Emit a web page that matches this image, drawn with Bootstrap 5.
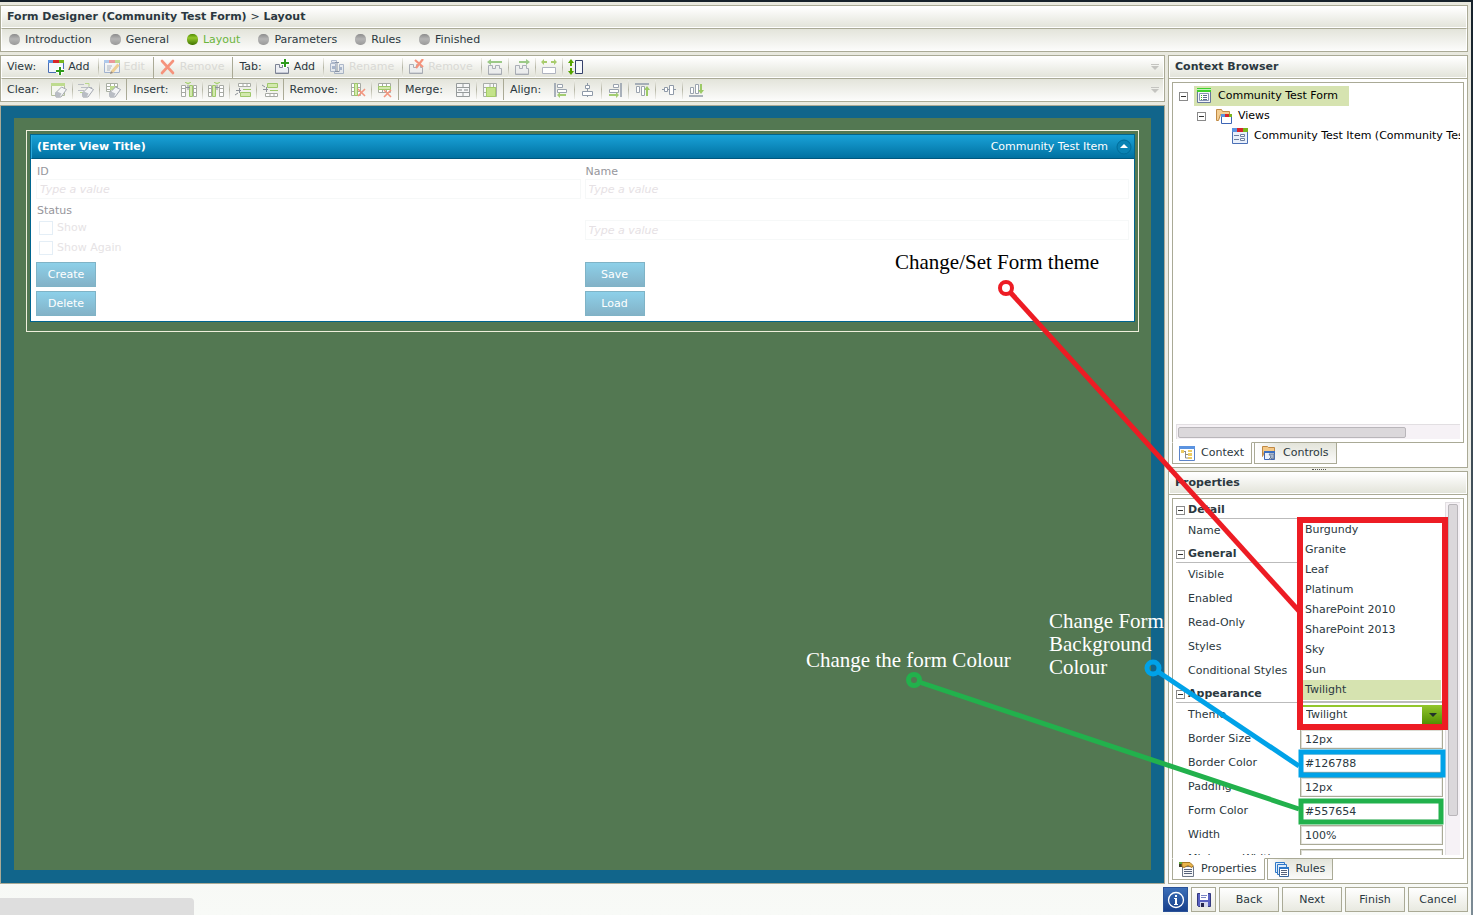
<!DOCTYPE html>
<html lang="en">
<head>
<meta charset="utf-8">
<meta name="viewport" content="width=device-width, initial-scale=1">
<title>Form Designer</title>
<link href="https://cdn.jsdelivr.net/npm/bootstrap@5.3.0/dist/css/bootstrap.min.css" rel="stylesheet">
<style>
:root{--line:#aaaa96;--ink:#2b3840;--face:"DejaVu Sans",Verdana,sans-serif}
body{font:11px/14px var(--face);color:var(--ink);background:linear-gradient(#e8e8de,#f0f1ea 60%,#f8faf7)}
.page{min-height:100vh;border-top:2px solid #16222b;padding:3px 3px 3px 0}
.edge{right:0;top:0;bottom:0;width:2px;background:linear-gradient(#16222b,#3e4c56 50%,#7c8b95)}
button,input,select{font:inherit;color:inherit}
.icon{width:16px;height:16px;flex:none}
.panel{border:1px solid var(--line);background:#fff}
.bar{height:22px;border:1px solid #fff;background:linear-gradient(#fff,#e3e4da)}
.bar.up{height:23px;background:linear-gradient(#e3e4da,#fbfbfa)}
.rule-top,.bar.rule-top{border-top:1px solid var(--line)}
.title{font-size:11px;line-height:14px;font-weight:bold;margin:0;padding-left:5px}
.steps{padding-left:7px}
.steps a{color:inherit;text-decoration:none;margin-right:18px}
.steps a.now{color:#6bb53c}
.dot{width:11px;height:11px;border-radius:5px;background:linear-gradient(#8c8c8c,#b4b4b4 45%,#999);margin-right:5px}
.now .dot{background:linear-gradient(#4f8c00,#93c62c 35%,#3f7300)}
.tool{border:0;background:none;padding:0 5px;height:20px}
.tool.wide{padding:0 8px 0 5px;gap:4px}
.tool:disabled{color:#d9d9d5}
.sep{width:1px;height:19px;background:linear-gradient(#f0f0ea,#b6b6a6,#f0f0ea)}
.sep.hard{background:var(--line);height:21px;margin-right:1px}
.caption{padding:0 7px 0 5px}
.stage{border:1px solid var(--line);background:#11658b;padding:12px 13px 13px}
.canvas{background:#537852;padding:12px}
.selected-view{border:1px solid #efefdc;padding:3px 3px 9px}
.view{border:1px solid #00658f;background:#fff}
.view-head{height:24px;background:linear-gradient(#1aa2d8,#0071a1);border-bottom:1px solid #00587f;color:#fff;padding:0 2px 0 5px;border-left:1px solid #2aa9dc}
.view-body{padding:6px 5px 5px}
.grid2{display:grid;grid-template-columns:1fr 1fr;column-gap:4px}
.faded{color:#96969c;padding-left:1px;display:block}
.value{width:100%;height:20px;border:1px solid #f6f8f8;padding:0 3px;background:#fff;display:block}
.value::placeholder{color:#e6e1e4;font-style:italic;opacity:1}
.tick{appearance:none;width:14px;height:14px;border:1px solid #e4eef6;margin:0 4px 0 3px}
.tickrow{height:20px;color:#e6e3e5}
.act{width:60px;height:25px;border:1px solid #7fb3c6;background:linear-gradient(#8dd0e9,#83b2c7);color:#fff;padding:0;display:block}
.side{width:300px;flex:none;gap:3px}
.side>section{flex:1 1 0;min-height:0}
.pane{border:1px solid var(--line);padding:3px;min-height:0}
.tree,.tree ul{list-style:none;margin:0;padding:0}
.tree{padding-left:3px}
.tree ul{padding-left:18px}
.tree .node{height:20px;white-space:nowrap;color:#000;gap:6px}
.tree .hit{height:20px;padding:0 11px 0 2px;gap:6px}
.tree .leaf{padding-left:17px}
.tree .sel{background:#d6e3b0}
.fold{width:9px;height:9px;border:1px solid #8a8a8a;background:linear-gradient(#333,#333) center/5px 1px no-repeat #fff;padding:0;flex:none}
.track{background:#f6f2f6;border:1px solid #e2dfe2;border-width:1px 0 0 1px;flex:none}
.thumb{background:#dbd8db;border:1px solid #b9b6ba;border-radius:2px}
.tabs{margin-top:-1px;gap:2px}
.tabs a{height:22px;border:1px solid var(--line);padding:0 7px 0 6px;gap:6px;color:inherit;text-decoration:none;background:linear-gradient(90deg,#fff,transparent 30%),linear-gradient(#e3e4da,#fbfbfa)}
.tabs a.on{border-top-color:#fff;background:#fff}
.split{right:147px;top:467px;width:14px;border-top:1px dotted #555}
.group{height:17px;border-bottom:1px solid #bbb;font-weight:bold;gap:3px;margin:3px 0 0}
.group:first-child{margin-top:0}
.prop{height:24px;padding-left:12px}
.prop label{width:112px;flex:none;white-space:nowrap}
.prop input{width:143px;height:20px;border:1px solid var(--line);padding:0 4px;box-shadow:inset 1px 1px #dcdcd4,inset -1px -1px #eee}
.combo{width:143px;height:20px}
.combo select{appearance:none;width:100%;height:20px;border:1px solid #93c62c;padding:0 5px;background:#fff;box-shadow:inset 0 1px #93c62c}
.combo .drop{right:0;top:0;width:21px;height:20px;background:linear-gradient(#93c62c,#4f8c00);pointer-events:none}
.choices{left:0;bottom:22px;width:143px;background:#fff;border-bottom:2px solid #bbb;padding:3px 2px 1px 3px;list-style:none;margin:0;z-index:2}
.choices li{height:20px;line-height:20px;padding-left:2px;white-space:nowrap}
.choices li.picked{background:#d6e3b0}
.foot{padding-top:3px;gap:3px}
.cmd{width:60px;height:25px;border:1px solid var(--line);background:linear-gradient(#fff,#e8e9e0);padding:0}
.cmd.sq{width:25px}
.cmd.info{background:linear-gradient(#3b6fb8,#173f8c);border-color:#2a5298}
.hint{left:0;bottom:0;width:194px;height:17px;background:#dedede;border-top-right-radius:4px}
.notes{right:0;top:0;width:673px;height:915px;pointer-events:none;z-index:5}
.notes text{font:21px "Liberation Serif",serif}
</style>
</head>
<body>
<svg class="d-none" xmlns="http://www.w3.org/2000/svg">
<symbol id="win" viewBox="0 0 16 16"><path fill="#f4f7fd" stroke="#4a6fb5" d="M.5 1.500h15v12H.5z"/><path fill="#5b93e0" d="M0 1h5v3H0z"/><path fill="#d8232a" d="M5 1h6v3H5z"/><path fill="#7ab51d" d="M11 1h5v3h-5z"/></symbol>
<symbol id="addview" viewBox="0 0 16 16"><use href="#win"/><path stroke="#fff" stroke-width="4" d="M12 7v9M8 12h8"/><path stroke="#2f9a1c" stroke-width="2" d="M12 8v8M8 12h8"/></symbol>
<symbol id="edit" viewBox="0 0 16 16"><g opacity=".45"><use href="#win"/><path stroke="#5b6b8c" d="M3 7h5M3 9h4M3 11h3"/></g><path stroke="#efcf94" stroke-width="3" d="M14.500 5.500 8 13"/><path fill="#9a8a78" d="m6 15 1-3 2 2z"/></symbol>
<symbol id="cross" viewBox="0 0 16 16"><path stroke="#f5937c" stroke-width="2.600" stroke-linecap="round" d="m2 2 11 12M13 2 2 14"/></symbol>
<symbol id="tabbase" viewBox="0 0 16 16"><path fill="#eceef3" stroke="#7c8394" d="M1.500 14.500v-9h4v3h3v-3h4v3h2v6z"/><path stroke="#c2c6d2" d="M2 13.500h12"/></symbol>
<symbol id="tabadd" viewBox="0 0 16 16"><use href="#tabbase"/><path stroke="#fff" stroke-width="4" d="M11 0v9M7 4h9"/><path stroke="#2f9a1c" stroke-width="2" d="M11 0v8M7 4h8"/></symbol>
<symbol id="rename" viewBox="0 0 16 16"><g opacity=".55"><path fill="#dfe5f1" stroke="#7387ab" d="M2.500 1.500h5v2h-5zM1.500 4.500h5v8h-5zM10.500 5.500h4v9h-9v-2h5z"/><path fill="none" stroke="#34496e" d="M6 3.500h4M8 3.500v9M6 12.500h4"/><path fill="#6e85b0" d="M3 7h3v3H3zM10 8h3v3h-3z"/></g></symbol>
<symbol id="tabdel" viewBox="0 0 16 16"><use href="#tabbase" opacity=".6"/><path stroke="#f5937c" stroke-width="2.200" d="m7 1 8 7M15 0 8 9"/></symbol>
<symbol id="tableft" viewBox="0 0 16 16"><use href="#tabbase" opacity=".6" y="1"/><path fill="#9bc987" d="m0 3 4-3v2h11v2H4v2z"/></symbol>
<symbol id="tabright" viewBox="0 0 16 16"><use href="#tabbase" opacity=".6" y="1"/><path fill="#9bc987" d="m16 3-4-3v2H5v2h7v2z"/></symbol>
<symbol id="fitw" viewBox="0 0 16 16"><path fill="#fff" stroke="#b0b4c0" d="M1.500 8.500h13v6h-13z"/><path fill="#a8cc6c" d="m0 3 3-3v2h3v2H3v2zM16 3l-3-3v2h-3v2h3v2z"/></symbol>
<symbol id="fith" viewBox="0 0 16 16"><path fill="#f6f8fc" stroke="#35406a" d="M7.500 1.500h7v13h-7z"/><path fill="#55a300" d="m3 0 3 4H4v3H2V4H0zM3 16l3-4H4V9H2v3H0z"/></symbol>
<symbol id="rub" viewBox="0 0 16 16"><path fill="#f4f5f6" stroke="#a4a8b0" d="m4.500 11 6-6 5 2.500-5.500 7.500H5z"/><path fill="#b9bdc4" d="m4 11 2-1.500 4.500 2-2 4H5z"/></symbol>
<symbol id="clear1" viewBox="0 0 16 16"><path fill="#f5f7ef" stroke="#b3bf9e" d="M.5 1.500h13v12H.5z"/><path fill="#bedb8f" d="M0 1h14v3H0z"/><use href="#rub"/></symbol>
<symbol id="clear2" viewBox="0 0 16 16"><path stroke="#b9bdc4" d="M0 2.500h6M3 5.500h11M0 8.500h6"/><path fill="none" stroke="#b9d88b" d="M7 1.500h4v3M2 10.500h4"/><use href="#rub"/></symbol>
<symbol id="clear3" viewBox="0 0 16 16"><path fill="#fff" stroke="#aab0a4" d="M1.500 1.500h11v8h-11zM5.500 1v9M9.500 1v9M1 4.500h12M1 7.500h12"/><path fill="#bedb8f" d="M5 4h5v4H5z"/><use href="#rub"/></symbol>
<symbol id="insl" viewBox="0 0 16 16"><path fill="#fff" stroke="#a7aaa4" d="M.5 3.500h4v11h-4zM12.500 3.500h3v11h-3zM0 6.500h5M0 10.500h5M12 6.500h4M12 10.500h4"/><path fill="#d3e9ad" stroke="#9ec86a" d="M8.500 3.500h3v11h-3zM4 0l3 2 3-2"/><path stroke="#8d9299" d="M5 5.500h4M7 3v5"/></symbol>
<symbol id="insr" viewBox="0 0 16 16"><use href="#insl" transform="translate(16 0) scale(-1 1)"/></symbol>
<symbol id="inst" viewBox="0 0 16 16"><path fill="#fff" stroke="#a7aaa4" d="M3.500 1.500h12v3h-12zM8 1v3M12 1v3"/><path fill="#d3e9ad" stroke="#9ec86a" d="M5.500 10.500h10v4h-10zM8 7.500h8"/><path stroke="#8d9299" d="M1 8.500h5M4.500 6v5M0 13l3-2"/></symbol>
<symbol id="insb" viewBox="0 0 16 16"><use href="#inst" transform="translate(0 16) scale(1 -1)"/></symbol>
<symbol id="delcol" viewBox="0 0 16 16"><path fill="#fff" stroke="#a7aaa4" d="M1.500 1.500h9v12h-9zM1 5.500h9M1 9.500h9"/><path fill="#d3e9ad" stroke="#9ec86a" d="M4.500 1.500h3v12h-3z"/><path stroke="#f3957e" stroke-width="1.600" d="m8 7 7 7M15 7l-7 7"/></symbol>
<symbol id="delrow" viewBox="0 0 16 16"><path fill="#fff" stroke="#a7aaa4" d="M1.500 1.500h12v9h-12zM5.500 1v9M9.500 1v9"/><path fill="#d3e9ad" stroke="#9ec86a" d="M1.500 4.500h12v3h-12z"/><path stroke="#f3957e" stroke-width="1.600" d="m7 8 7 7M14 8l-7 7"/></symbol>
<symbol id="mergeh" viewBox="0 0 16 16"><path fill="#f6f7f7" stroke="#969b9b" d="M1.500 1.500h13v13h-13zM1 5.500h14M1 10.500h14M8 2v3M8 11v3"/><path stroke="#83898b" d="M3 8h4M9 8h4"/></symbol>
<symbol id="merger" viewBox="0 0 16 16"><path fill="#f6f7f7" stroke="#a9aea9" d="M1.500 1.500h13v13h-13zM1 5.500h14M1 10.500h4M8 2v3M11.500 2v3"/><path fill="#c3e38a" stroke="#a5cc68" d="M4.500 5.500h9v9h-9z"/></symbol>
<symbol id="all" viewBox="0 0 16 16"><path stroke="#8f9aa8" stroke-width="1.500" d="M2 1v14"/><path fill="#fff" stroke="#9aa3ae" d="M4.500 2.500h5v3h-5zM4.500 7.500h9v3h-9z"/><path fill="#a3cd72" d="m4 13 3-3v2h6v2H7v2z"/></symbol>
<symbol id="alc" viewBox="0 0 16 16"><path stroke="#8f9aa8" d="M7.500 1v14"/><path fill="#fff" stroke="#8f9aa8" d="M5.500 3.500h4v3h-4zM2.500 9.500h10v4h-10z"/></symbol>
<symbol id="alr" viewBox="0 0 16 16"><path stroke="#8f9aa8" stroke-width="1.500" d="M14 1v14"/><path fill="#fff" stroke="#9aa3ae" d="M6.500 2.500h5v3h-5zM2.500 7.500h9v3h-9z"/><path fill="#a3cd72" d="m12 13-3-3v2H2v2h7v2z"/></symbol>
<symbol id="alt" viewBox="0 0 16 16"><path stroke="#8f9aa8" stroke-width="1.500" d="M1 2h14"/><path fill="#fff" stroke="#9aa3ae" d="M2.500 4.500h3v6h-3zM7.500 4.500h3v9h-3z"/><path fill="#9cca66" d="m13 4 3 4h-2v6h-2V8h-2z"/></symbol>
<symbol id="alm" viewBox="0 0 16 16"><path stroke="#8f9aa8" d="M1 7.500h14"/><path fill="#fff" stroke="#8f9aa8" d="M3.500 5.500h3v4h-3zM8.500 3.500h4v9h-4z"/></symbol>
<symbol id="alb" viewBox="0 0 16 16"><path stroke="#8f9aa8" stroke-width="1.500" d="M1 14h14"/><path fill="#fff" stroke="#9aa3ae" d="M2.500 5.500h3v6h-3zM7.500 2.500h3v9h-3z"/><path fill="#9cca66" d="m13 12 3-4h-2V2h-2v6h-2z"/></symbol>
<symbol id="form" viewBox="0 0 16 16"><path fill="#f4f6fb" stroke="#66779c" d="M1.500 1.500h13v13h-13z"/><path fill="#3fd12c" d="M1 0h14v4H1z"/><path fill="#c6f3bd" d="M1 1h14v1H1z"/><path fill="#fff" stroke="#8794b3" d="M3.500 5.500h9v7h-9z"/><path stroke="#2fbf1e" d="M5 7.500h1M5 9.500h1M5 11.500h1"/><path stroke="#5b6b8c" d="M7 7.500h4M7 9.500h4M7 11.500h4"/></symbol>
<symbol id="folder" viewBox="0 0 16 16"><path fill="#f4cf93" stroke="#c08a45" d="M.5 12.500v-11h5l1 2h7v3h-9l-2 6z"/><path fill="#fff" stroke="#3c65b5" d="M5.500 6.500h10v9h-10z"/><path fill="#5b93e0" d="M5 6h4v3H5z"/><path fill="#d8232a" d="M9 6h4v3H9z"/><path fill="#7ab51d" d="M13 6h3v3h-3z"/></symbol>
<symbol id="item" viewBox="0 0 16 16"><path fill="#e9f0fb" stroke="#4a6fb5" d="M.5 1.500h15v14H.5z"/><path fill="#5b93e0" d="M0 0h5v4H0z"/><path fill="#d8232a" d="M5 0h6v4H5z"/><path fill="#7ab51d" d="M11 0h5v4h-5z"/><path fill="#fff" stroke="#6d7f9f" d="M8.500 6.500h4v2h-4zM8.500 10.500h4v2h-4zM2 7.500h5M2 11.500h5"/></symbol>
<symbol id="ctx" viewBox="0 0 16 16"><path fill="#fff" stroke="#5b83c8" d="M.5 1.500h15v14H.5z"/><path fill="#5b93e0" d="M0 1h16v3H0z"/><path fill="none" stroke="#8a8a8a" d="M4 6.500h3M6.500 6v7h3M6 9.500h3"/><path fill="#eccb62" d="M2 5h3v3H2zM9 5h4v2H9zM9 8h4v3H9zM9 12h4v2H9z"/></symbol>
<symbol id="ctl" viewBox="0 0 16 16"><path fill="#f4c987" stroke="#bf8844" d="M1.500 11.500v-10h5l1 1h6v4h-10z"/><path fill="#e9f0fb" stroke="#3c65b5" d="M3.500 6.500h10v8h-10z"/><path fill="#3c6fc0" d="M3 6h11v2H3z"/><path fill="#a9b9d0" stroke="#6b7c97" d="m8 9 5 0v5l-2-1-2 2-1-1 2-2z"/></symbol>
<symbol id="props" viewBox="0 0 16 16"><path fill="#f7f8fa" stroke="#6d7787" d="M3.500 5.500h11v10h-11z"/><path stroke="#56627a" d="M5 8.500h8M5 10.500h8M5 12.500h8"/><path fill="#3c3c2c" d="M0 1h3v5H0z"/><path fill="#e8b54c" stroke="#a87722" d="M3 1.500h8l3 3-1 2-4-2-4 2-2-1z"/><path fill="#5da53a" d="M0 1h3v2H0z"/></symbol>
<symbol id="rules" viewBox="0 0 16 16"><path fill="#dcebfa" stroke="#2e78c8" d="M1.500 1.500h9v10h-9z"/><path fill="#dcebfa" stroke="#2e78c8" d="M3.500 3.500h9v10h-9z"/><path fill="#fff" stroke="#36649c" d="M5.500 6.500h9v9h-9z"/><path fill="#2e78c8" d="M5 6h10v2H5z"/><path stroke="#56627a" d="M7 9.500h6M7 11.500h6M7 13.500h6"/></symbol>
<symbol id="disk" viewBox="0 0 16 16"><path fill="#5860c0" stroke="#33397f" d="M1.500 1.500h13v13h-12l-1-1z"/><path fill="#fff" d="M4 1h8v7H4z"/><path stroke="#7a85c4" d="M5 3.500h6M5 5.500h5"/><path fill="#d5d9ef" d="M4 10h8v5H4z"/><path fill="#26264e" d="M5 11h3v4H5z"/></symbol>
<symbol id="info" viewBox="0 0 18 18"><circle cx="9" cy="9" r="7.500" fill="none" stroke="#fff" stroke-width="1.300"/><path fill="#fff" d="M8 4h2v2H8zM7 7h3v6h1v1H7v-1h1V8H7z"/></symbol>
<symbol id="more" viewBox="0 0 8 6"><path fill="#c4c4c0" d="M0 0h8v1H0zM0 2h8L4 6z"/></symbol>
</svg>

<div class="page d-flex flex-column position-relative">
<div class="edge position-absolute"></div>
<header class="panel" style="margin-right:2px">
  <div class="bar d-flex align-items-center"><h1 class="title">Form Designer (Community Test Form) <span class="fw-normal">&gt;</span> Layout</h1></div>
  <nav class="bar up steps rule-top d-flex align-items-center" aria-label="Steps">
    <a class="d-flex align-items-center" href="#"><i class="dot"></i>Introduction</a>
    <a class="d-flex align-items-center" href="#"><i class="dot"></i>General</a>
    <a class="d-flex align-items-center now" href="#"><i class="dot"></i>Layout</a>
    <a class="d-flex align-items-center" href="#"><i class="dot"></i>Parameters</a>
    <a class="d-flex align-items-center" href="#"><i class="dot"></i>Rules</a>
    <a class="d-flex align-items-center" href="#"><i class="dot"></i>Finished</a>
  </nav>
</header>

<div class="d-flex flex-grow-1" style="margin:3px 2px 0 0;gap:3px">
<main class="d-flex flex-column flex-grow-1" style="gap:3px">
  <div class="panel">
    <div class="bar d-flex align-items-center">
      <span class="caption">View:</span>
      <button class="tool wide d-flex align-items-center"><svg class="icon"><use href="#addview"/></svg>Add</button><i class="sep"></i>
      <button class="tool wide d-flex align-items-center" disabled><svg class="icon"><use href="#edit"/></svg>Edit</button><i class="sep hard"></i>
      <button class="tool wide d-flex align-items-center" disabled><svg class="icon"><use href="#cross"/></svg>Remove</button><i class="sep hard"></i>
      <span class="caption">Tab:</span>
      <button class="tool wide d-flex align-items-center"><svg class="icon"><use href="#tabadd"/></svg>Add</button><i class="sep"></i>
      <button class="tool wide d-flex align-items-center" disabled><svg class="icon"><use href="#rename"/></svg>Rename</button><i class="sep"></i>
      <button class="tool wide d-flex align-items-center" disabled><svg class="icon"><use href="#tabdel"/></svg>Remove</button><i class="sep"></i>
      <button class="tool d-flex align-items-center" aria-label="Move tab left" disabled><svg class="icon"><use href="#tableft"/></svg></button><i class="sep"></i>
      <button class="tool d-flex align-items-center" aria-label="Move tab right" disabled><svg class="icon"><use href="#tabright"/></svg></button><i class="sep"></i>
      <button class="tool d-flex align-items-center" aria-label="Fit width" disabled><svg class="icon"><use href="#fitw"/></svg></button><i class="sep"></i>
      <button class="tool d-flex align-items-center" aria-label="Fit height"><svg class="icon"><use href="#fith"/></svg></button>
      <svg class="ms-auto me-1" width="8" height="6"><use href="#more"/></svg>
    </div>
    <div class="bar up rule-top d-flex align-items-center">
      <span class="caption">Clear:</span>
      <button class="tool d-flex align-items-center" aria-label="Clear view" disabled><svg class="icon"><use href="#clear1"/></svg></button><i class="sep"></i>
      <button class="tool d-flex align-items-center" aria-label="Clear contents" disabled><svg class="icon"><use href="#clear2"/></svg></button><i class="sep"></i>
      <button class="tool d-flex align-items-center" aria-label="Clear table" disabled><svg class="icon"><use href="#clear3"/></svg></button><i class="sep hard"></i>
      <span class="caption">Insert:</span>
      <button class="tool d-flex align-items-center" aria-label="Insert column left" disabled><svg class="icon"><use href="#insl"/></svg></button><i class="sep"></i>
      <button class="tool d-flex align-items-center" aria-label="Insert column right" disabled><svg class="icon"><use href="#insr"/></svg></button><i class="sep"></i>
      <button class="tool d-flex align-items-center" aria-label="Insert row above" disabled><svg class="icon"><use href="#inst"/></svg></button><i class="sep"></i>
      <button class="tool d-flex align-items-center" aria-label="Insert row below" disabled><svg class="icon"><use href="#insb"/></svg></button><i class="sep hard"></i>
      <span class="caption">Remove:</span>
      <button class="tool d-flex align-items-center" aria-label="Remove column" disabled><svg class="icon"><use href="#delcol"/></svg></button><i class="sep"></i>
      <button class="tool d-flex align-items-center" aria-label="Remove row" disabled><svg class="icon"><use href="#delrow"/></svg></button><i class="sep hard"></i>
      <span class="caption">Merge:</span>
      <button class="tool d-flex align-items-center" aria-label="Merge cells" disabled><svg class="icon"><use href="#mergeh"/></svg></button><i class="sep"></i>
      <button class="tool d-flex align-items-center" aria-label="Merge range" disabled><svg class="icon"><use href="#merger"/></svg></button><i class="sep hard"></i>
      <span class="caption">Align:</span>
      <button class="tool d-flex align-items-center" aria-label="Align left" disabled><svg class="icon"><use href="#all"/></svg></button><i class="sep"></i>
      <button class="tool d-flex align-items-center" aria-label="Align center" disabled><svg class="icon"><use href="#alc"/></svg></button><i class="sep"></i>
      <button class="tool d-flex align-items-center" aria-label="Align right" disabled><svg class="icon"><use href="#alr"/></svg></button><i class="sep"></i>
      <button class="tool d-flex align-items-center" aria-label="Align top" disabled><svg class="icon"><use href="#alt"/></svg></button><i class="sep"></i>
      <button class="tool d-flex align-items-center" aria-label="Align middle" disabled><svg class="icon"><use href="#alm"/></svg></button><i class="sep"></i>
      <button class="tool d-flex align-items-center" aria-label="Align bottom" disabled><svg class="icon"><use href="#alb"/></svg></button>
      <svg class="ms-auto me-1" width="8" height="6"><use href="#more"/></svg>
    </div>
  </div>

  <div class="stage d-flex flex-column flex-grow-1">
    <div class="canvas flex-grow-1">
      <div class="selected-view">
        <div class="view">
          <div class="view-head d-flex align-items-center">
            <strong class="me-auto">(Enter View Title)</strong>
            <span class="me-2">Community Test Item</span>
            <svg width="16" height="16" viewBox="0 0 16 16"><circle cx="8" cy="8" r="7" fill="#0a83b4" stroke="#006c99"/><path fill="#fff" d="m8 5 4 4H4z"/></svg>
          </div>
          <div class="view-body">
            <div class="grid2">
              <div><label class="faded" for="vid">ID</label><input class="value" id="vid" placeholder="Type a value"></div>
              <div><label class="faded" for="vname">Name</label><input class="value" id="vname" placeholder="Type a value"></div>
            </div>
            <div class="grid2" style="margin-top:5px">
              <div>
                <span class="faded">Status</span>
                <div class="tickrow d-flex align-items-center"><input class="tick" type="checkbox" id="s1"><label for="s1">Show</label></div>
                <div class="tickrow d-flex align-items-center"><input class="tick" type="checkbox" id="s2"><label for="s2">Show Again</label></div>
              </div>
              <div class="pt-3"><input class="value" aria-label="Status value" placeholder="Type a value"></div>
            </div>
            <div class="grid2" style="margin-top:4px;row-gap:4px">
              <button class="act">Create</button><button class="act">Save</button>
              <button class="act">Delete</button><button class="act">Load</button>
            </div>
          </div>
        </div>
      </div>
    </div>
  </div>
</main>

<aside class="side d-flex flex-column">
  <section class="panel d-flex flex-column">
    <div class="bar d-flex align-items-center flex-shrink-0"><h2 class="title">Context Browser</h2></div>
    <div class="rule-top d-flex flex-column flex-grow-1" style="padding:3px;min-height:0">
      <div class="pane d-flex flex-column flex-grow-1">
        <div class="overflow-hidden flex-grow-1">
        <ul class="tree">
          <li><div class="node d-flex align-items-center"><button class="fold" aria-label="Collapse form"></button><span class="hit sel d-flex align-items-center"><svg class="icon"><use href="#form"/></svg>Community Test Form</span></div>
            <ul><li><div class="node d-flex align-items-center"><button class="fold" aria-label="Collapse views"></button><svg class="icon ms-1"><use href="#folder"/></svg>Views</div>
              <ul><li><div class="node leaf d-flex align-items-center"><svg class="icon"><use href="#item"/></svg>Community Test Item (Community Test Item)</div></li></ul>
            </li></ul>
          </li>
        </ul>
        </div>
        <div class="track" style="height:15px;padding:2px 1px"><div class="thumb" style="width:81%;height:11px"></div></div>
      </div>
      <nav class="tabs d-flex" aria-label="Browser"><a class="on d-flex align-items-center" href="#"><svg class="icon"><use href="#ctx"/></svg>Context</a><a class="d-flex align-items-center" href="#"><svg class="icon"><use href="#ctl"/></svg>Controls</a></nav>
    </div>
  </section>
  <section class="panel d-flex flex-column">
    <div class="bar d-flex align-items-center flex-shrink-0"><h2 class="title">Properties</h2></div>
    <div class="rule-top d-flex flex-column flex-grow-1" style="padding:3px;min-height:0">
      <div class="pane d-flex flex-grow-1">
        <div class="overflow-hidden flex-grow-1">
          <h3 class="group title ps-0 d-flex align-items-center"><button class="fold" aria-label="Collapse detail"></button>Detail</h3>
          <div class="prop d-flex align-items-center"><label for="p1">Name</label><input id="p1"></div>
          <h3 class="group title ps-0 d-flex align-items-center"><button class="fold" aria-label="Collapse general"></button>General</h3>
          <div class="prop d-flex align-items-center"><label for="p2">Visible</label><input id="p2"></div>
          <div class="prop d-flex align-items-center"><label for="p3">Enabled</label><input id="p3"></div>
          <div class="prop d-flex align-items-center"><label for="p4">Read-Only</label><input id="p4"></div>
          <div class="prop d-flex align-items-center"><label for="p5">Styles</label><input id="p5"></div>
          <div class="prop d-flex align-items-center"><label for="p6">Conditional Styles</label><input id="p6"></div>
          <h3 class="group title ps-0 d-flex align-items-center"><button class="fold" aria-label="Collapse appearance"></button>Appearance</h3>
          <div class="prop d-flex align-items-center"><label for="theme">Theme</label>
            <div class="combo position-relative">
              <select id="theme"><option>Twilight</option></select>
              <span class="drop position-absolute d-flex align-items-center justify-content-center"><svg width="8" height="4"><path fill="#22322a" d="M0 0h8L4 4z"/></svg></span>
              <ul class="choices position-absolute" role="listbox" aria-label="Theme choices">
                <li>Burgundy</li><li>Granite</li><li>Leaf</li><li>Platinum</li><li>SharePoint 2010</li><li>SharePoint 2013</li><li>Sky</li><li>Sun</li><li class="picked">Twilight</li>
              </ul>
            </div>
          </div>
          <div class="prop d-flex align-items-center"><label for="p7">Border Size</label><input id="p7" value="12px"></div>
          <div class="prop d-flex align-items-center"><label for="p8">Border Color</label><input id="p8" value="#126788"></div>
          <div class="prop d-flex align-items-center"><label for="p9">Padding</label><input id="p9" value="12px"></div>
          <div class="prop d-flex align-items-center"><label for="p10">Form Color</label><input id="p10" value="#557654"></div>
          <div class="prop d-flex align-items-center"><label for="p11">Width</label><input id="p11" value="100%"></div>
          <div class="prop d-flex align-items-center"><label for="p12">Minimum Width</label><input id="p12"></div>
        </div>
        <div class="track" style="width:15px;padding:1px 2px"><div class="thumb" style="width:10px;height:89%"></div></div>
      </div>
      <nav class="tabs d-flex" aria-label="Property views"><a class="on d-flex align-items-center" href="#"><svg class="icon"><use href="#props"/></svg>Properties</a><a class="d-flex align-items-center" href="#"><svg class="icon"><use href="#rules"/></svg>Rules</a></nav>
    </div>
  </section>
</aside>
</div>

<footer class="foot d-flex justify-content-end" style="margin-right:2px">
  <button class="cmd sq info d-flex align-items-center justify-content-center" aria-label="Information"><svg width="18" height="18"><use href="#info"/></svg></button>
  <button class="cmd sq d-flex align-items-center justify-content-center" aria-label="Save"><svg class="icon"><use href="#disk"/></svg></button>
  <button class="cmd">Back</button><button class="cmd">Next</button><button class="cmd">Finish</button><button class="cmd">Cancel</button>
</footer>
<div class="hint position-absolute"></div>
<div class="split position-absolute"></div>

<!-- call-outs; the origin is the top right corner, so they stay with the side panels -->
<svg class="notes position-absolute" viewBox="800 2 673 915" fill="none">
  <g stroke="#ed1c24" stroke-width="5"><path d="M1010 292 1299 611"/><rect x="1300" y="520" width="145" height="207" stroke-width="6"/><circle cx="1006" cy="288" r="6" stroke-width="4"/></g>
  <g stroke="#00a2e8" stroke-width="5"><path d="m1157 671 142 95"/><rect x="1301" y="752" width="142" height="23"/><circle cx="1153" cy="668" r="6"/></g>
  <g stroke="#22b14c" stroke-width="5"><path d="m919 682 380 127"/><rect x="1301" y="801" width="140" height="21"/><circle cx="914" cy="680" r="5.500"/></g>
  <text x="895" y="269" fill="#000">Change/Set Form theme</text>
  <text x="806" y="667" fill="#fff">Change the form Colour</text>
  <text fill="#fff"><tspan x="1049" y="628">Change Form</tspan><tspan x="1049" y="651">Background</tspan><tspan x="1049" y="674">Colour</tspan></text>
</svg>
</div>
<script src="https://cdn.jsdelivr.net/npm/bootstrap@5.3.0/dist/js/bootstrap.bundle.min.js"></script>
</body>
</html>
